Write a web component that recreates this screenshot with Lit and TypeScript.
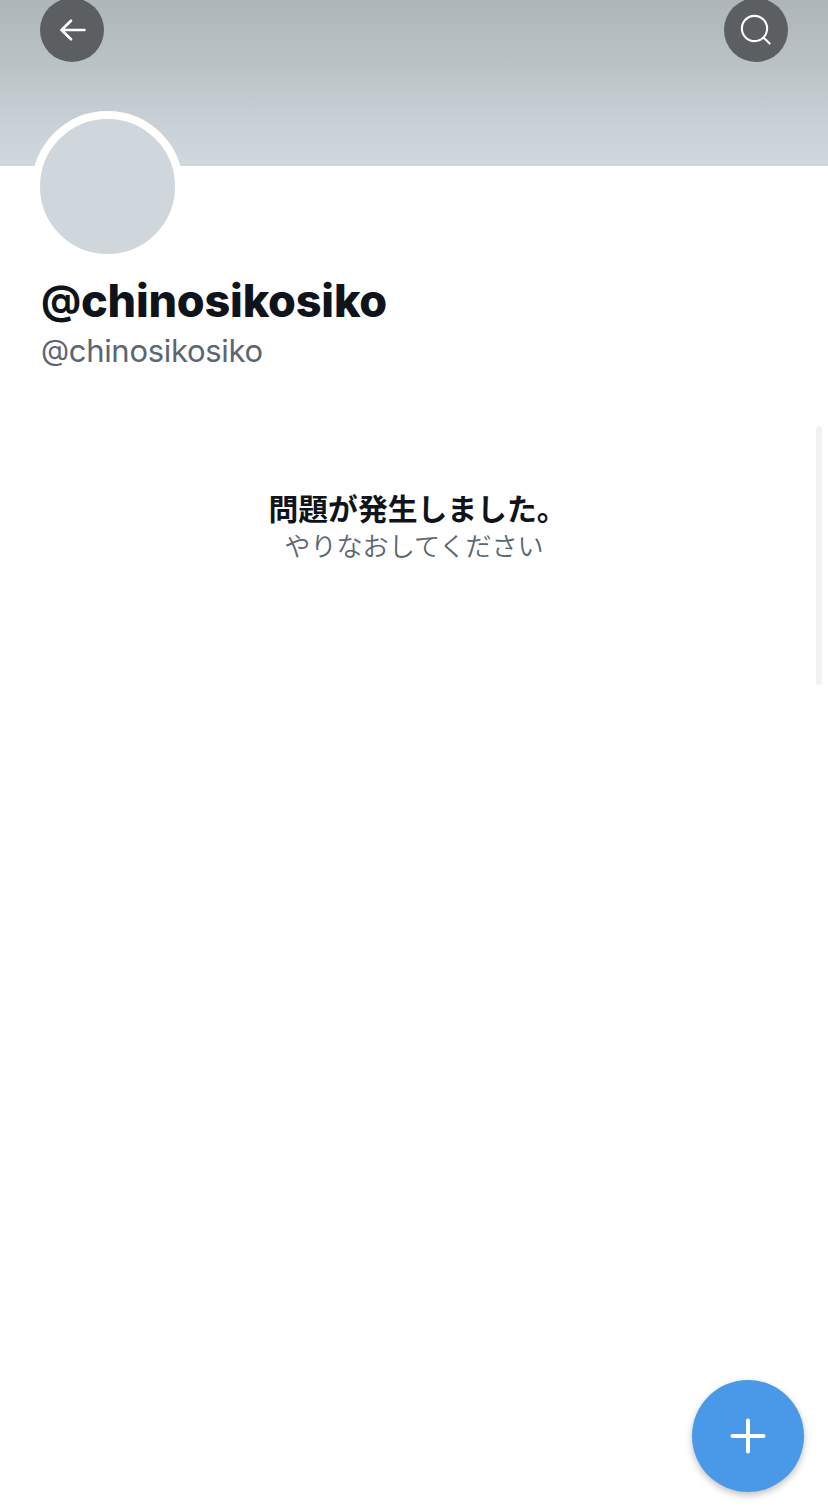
import { LitElement, html, css } from "lit";
import { customElement } from "lit/decorators.js";

@customElement("app-root")
export class AppRoot extends LitElement {
  static styles = css`
    :host {
      display: block;
      position: relative;
      box-sizing: border-box;
      height: 1512px;
      overflow: hidden;
      background: #fff;
      font-family: Inter, "Noto Sans CJK JP", sans-serif;
      color: #0f141a;
    }
    * { box-sizing: border-box; }
    button { border: 0; padding: 0; display: block; }
    svg { display: block; }
    .banner {
      height: 166px;
      padding: 0 40px;
      display: flex;
      justify-content: space-between;
      align-items: flex-start;
      background: linear-gradient(#aeb6b9 0, #b9c1c4 60px, #c3cacf 95px, #cad1d7 130px, #d0d7dd 166px);
    }
    .round {
      width: 64px;
      height: 64px;
      margin-top: -2px;
      border-radius: 50%;
      background: #5b5f62;
    }
    .profile { padding: 0 41px; margin-top: -55px; }
    .avatar {
      width: 151px;
      height: 151px;
      margin-left: -9px;
      border: 8px solid #fff;
      border-radius: 50%;
      background: #cfd6dc;
    }
    .name {
      margin: 11px 0 0;
      font-size: 45px;
      line-height: 56px;
      font-weight: 800;
      letter-spacing: -0.2px;
      white-space: nowrap;
    }
    .at { line-height: 0; }
    .name .at { font-size: 39.5px; font-weight: 700; vertical-align: 3px; }
    .handle {
      margin: 0;
      font-size: 31px;
      line-height: 44px;
      letter-spacing: -0.3px;
      color: #5b6672;
      white-space: nowrap;
    }
    .handle .at { font-size: 29px; vertical-align: 2px; }
    .error {
      margin-top: 117px;
      text-align: center;
    }
    .title { margin: 0; padding-left: 7px; font-size: 29.8px; line-height: 38px; font-weight: 700; }
    .hint { margin: 0; font-size: 26.1px; line-height: 38px; font-weight: 350; color: #5b6672; }
    .thumb {
      position: absolute;
      top: 426px;
      right: 6px;
      width: 6px;
      height: 259px;
      border-radius: 3px;
      background: #f2f2f2;
    }
    .compose {
      position: absolute;
      right: 24px;
      bottom: 20px;
      width: 112px;
      height: 112px;
      border-radius: 50%;
      background: #4a99e9;
      box-shadow: 0 3px 7px rgba(0, 0, 0, 0.25);
    }
  `;

  render() {
    return html`
      <header class="banner">
        <button class="round" aria-label="戻る">
          <svg width="64" height="64" viewBox="0 0 64 64" fill="none" stroke="#fff" stroke-width="2.7" stroke-linecap="round" stroke-linejoin="round">
            <path d="M44.4 32H21.5M31 22.7L21.5 32L31 41.3" />
          </svg>
        </button>
        <button class="round" aria-label="検索">
          <svg width="64" height="64" viewBox="0 0 64 64" fill="none" stroke="#fff" stroke-width="2.1">
            <circle cx="30.5" cy="30.5" r="12.6" />
            <path d="M39.4 39.4L46.2 46.1" />
          </svg>
        </button>
      </header>
      <section class="profile">
        <div class="avatar"></div>
        <h1 class="name"><span class="at">@</span>chinosikosiko</h1>
        <p class="handle"><span class="at">@</span>chinosikosiko</p>
      </section>
      <section class="error">
        <h2 class="title">問題が発生しました。</h2>
        <p class="hint">やりなおしてください</p>
      </section>
      <div class="thumb"></div>
      <button class="compose" aria-label="作成">
        <svg width="112" height="112" viewBox="0 0 112 112" fill="none" stroke="#fff" stroke-width="4" stroke-linecap="round">
          <path d="M40.5 56H71.5M56 40.5V71.5" />
        </svg>
      </button>
    `;
  }
}
